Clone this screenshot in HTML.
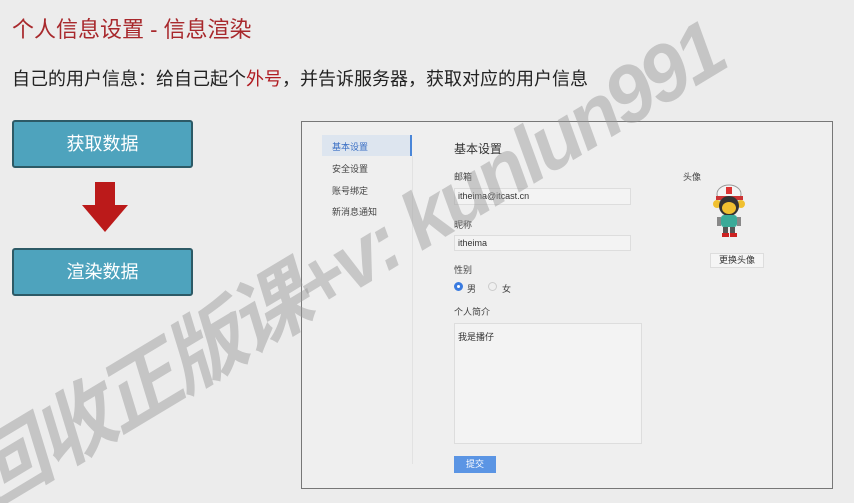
<!DOCTYPE html>
<html style="overflow:hidden;width:854px;height:503px"><head><meta charset="utf-8"><style>
*{margin:0;padding:0;box-sizing:border-box}
body{width:854px;height:503px;background:#ececec;position:relative;overflow:hidden;font-family:"Liberation Sans","Noto Sans CJK SC",sans-serif}
.a{position:absolute}
.t{left:12px;top:12px;font-size:22px;color:#a8282c}
.s{left:12px;top:65px;font-size:18px;color:#222}
.btn{left:12px;width:181px;height:48px;background:#4ea3bd;border:2px solid #2d5a66;border-radius:3px;color:#fff;font-size:18px;text-align:center;line-height:44px}
.p{left:301px;top:121px;width:532px;height:368px;border:1px solid #777;background:#efefef}
.sm{font-size:9px;color:#444}
.in{background:#f3f3f3;border:1px solid #ddd;font-size:9px;color:#333;padding-left:3px}
.wm{left:-25px;top:448px;font-size:80px;line-height:80px;height:80px;letter-spacing:-4px;font-weight:bold;color:rgba(150,150,150,.45);transform:rotate(-31deg);transform-origin:left center;white-space:nowrap;font-style:italic;width:1100px}
</style></head><body>
<div class="a t">个人信息设置 - 信息渲染</div>
<div class="a s">自己的用户信息：给自己起个<span style="color:#b01c22">外号</span>，并告诉服务器，获取对应的用户信息</div>
<div class="a btn" style="top:120px">获取数据</div>
<div class="a" style="left:95px;top:182px;width:20px;height:24px;background:#bb1a1a"></div>
<div class="a" style="left:82px;top:205px;width:0;height:0;border-left:23px solid transparent;border-right:23px solid transparent;border-top:27px solid #bb1a1a"></div>
<div class="a btn" style="top:248px">渲染数据</div>
<div class="a p"></div>
<div class="a" style="left:322px;top:135px;width:90px;height:21px;background:#dde5ef;border-right:2px solid #4a86d8"></div>
<div class="a sm" style="left:332px;top:140px;color:#3a6fc4">基本设置</div>
<div class="a sm" style="left:332px;top:162px">安全设置</div>
<div class="a sm" style="left:332px;top:184px">账号绑定</div>
<div class="a sm" style="left:332px;top:205px">新消息通知</div>
<div class="a" style="left:412px;top:156px;width:1px;height:308px;background:#e2e2e2"></div>
<div class="a" style="left:454px;top:140px;font-size:12px;color:#333">基本设置</div>
<div class="a sm" style="left:454px;top:170px">邮箱</div>
<div class="a in" style="left:454px;top:188px;width:177px;height:17px;line-height:15px">itheima@itcast.cn</div>
<div class="a sm" style="left:454px;top:218px">昵称</div>
<div class="a in" style="left:454px;top:235px;width:177px;height:16px;line-height:14px">itheima</div>
<div class="a sm" style="left:454px;top:263px">性别</div>
<div class="a" style="left:454px;top:282px;width:9px;height:9px;border:3px solid #3a7be0;border-radius:50%;background:#fff"></div>
<div class="a sm" style="left:467px;top:282px">男</div>
<div class="a" style="left:488px;top:282px;width:9px;height:9px;border:1px solid #ccc;border-radius:50%"></div>
<div class="a sm" style="left:502px;top:282px">女</div>
<div class="a sm" style="left:454px;top:305px">个人简介</div>
<div class="a in" style="left:454px;top:323px;width:188px;height:121px;padding:6px 3px">我是播仔</div>
<div class="a" style="left:454px;top:456px;width:42px;height:17px;background:#5b95e4;color:#fff;font-size:9px;text-align:center;line-height:17px">提交</div>
<div class="a sm" style="left:683px;top:170px">头像</div>
<svg class="a" style="left:712px;top:183px" width="34" height="56" viewBox="0 0 34 56">
<ellipse cx="17" cy="11" rx="12" ry="9" fill="#f4f4f4" stroke="#999"/>
<rect x="14" y="4" width="6" height="7" fill="#d33"/>
<rect x="4" y="13" width="27" height="4" fill="#c33"/>
<circle cx="5" cy="21" r="4" fill="#f0c030"/><circle cx="29" cy="21" r="4" fill="#f0c030"/>
<circle cx="17" cy="23" r="10" fill="#333"/><ellipse cx="17" cy="25" rx="7" ry="6" fill="#f0c030"/>
<rect x="9" y="32" width="16" height="12" rx="3" fill="#3aaa98"/>
<rect x="5" y="34" width="4" height="9" fill="#888"/><rect x="25" y="34" width="4" height="9" fill="#888"/>
<rect x="11" y="44" width="5" height="7" fill="#555"/><rect x="18" y="44" width="5" height="7" fill="#555"/>
<rect x="10" y="50" width="7" height="4" fill="#c22"/><rect x="18" y="50" width="7" height="4" fill="#c22"/>
</svg>
<div class="a" style="left:710px;top:253px;width:54px;height:15px;border:1px solid #ddd;background:#f5f5f5;font-size:9px;color:#333;text-align:center;line-height:13px">更换头像</div>
<div class="a wm">回收正版课+v: kunlun991</div>
</body></html>
